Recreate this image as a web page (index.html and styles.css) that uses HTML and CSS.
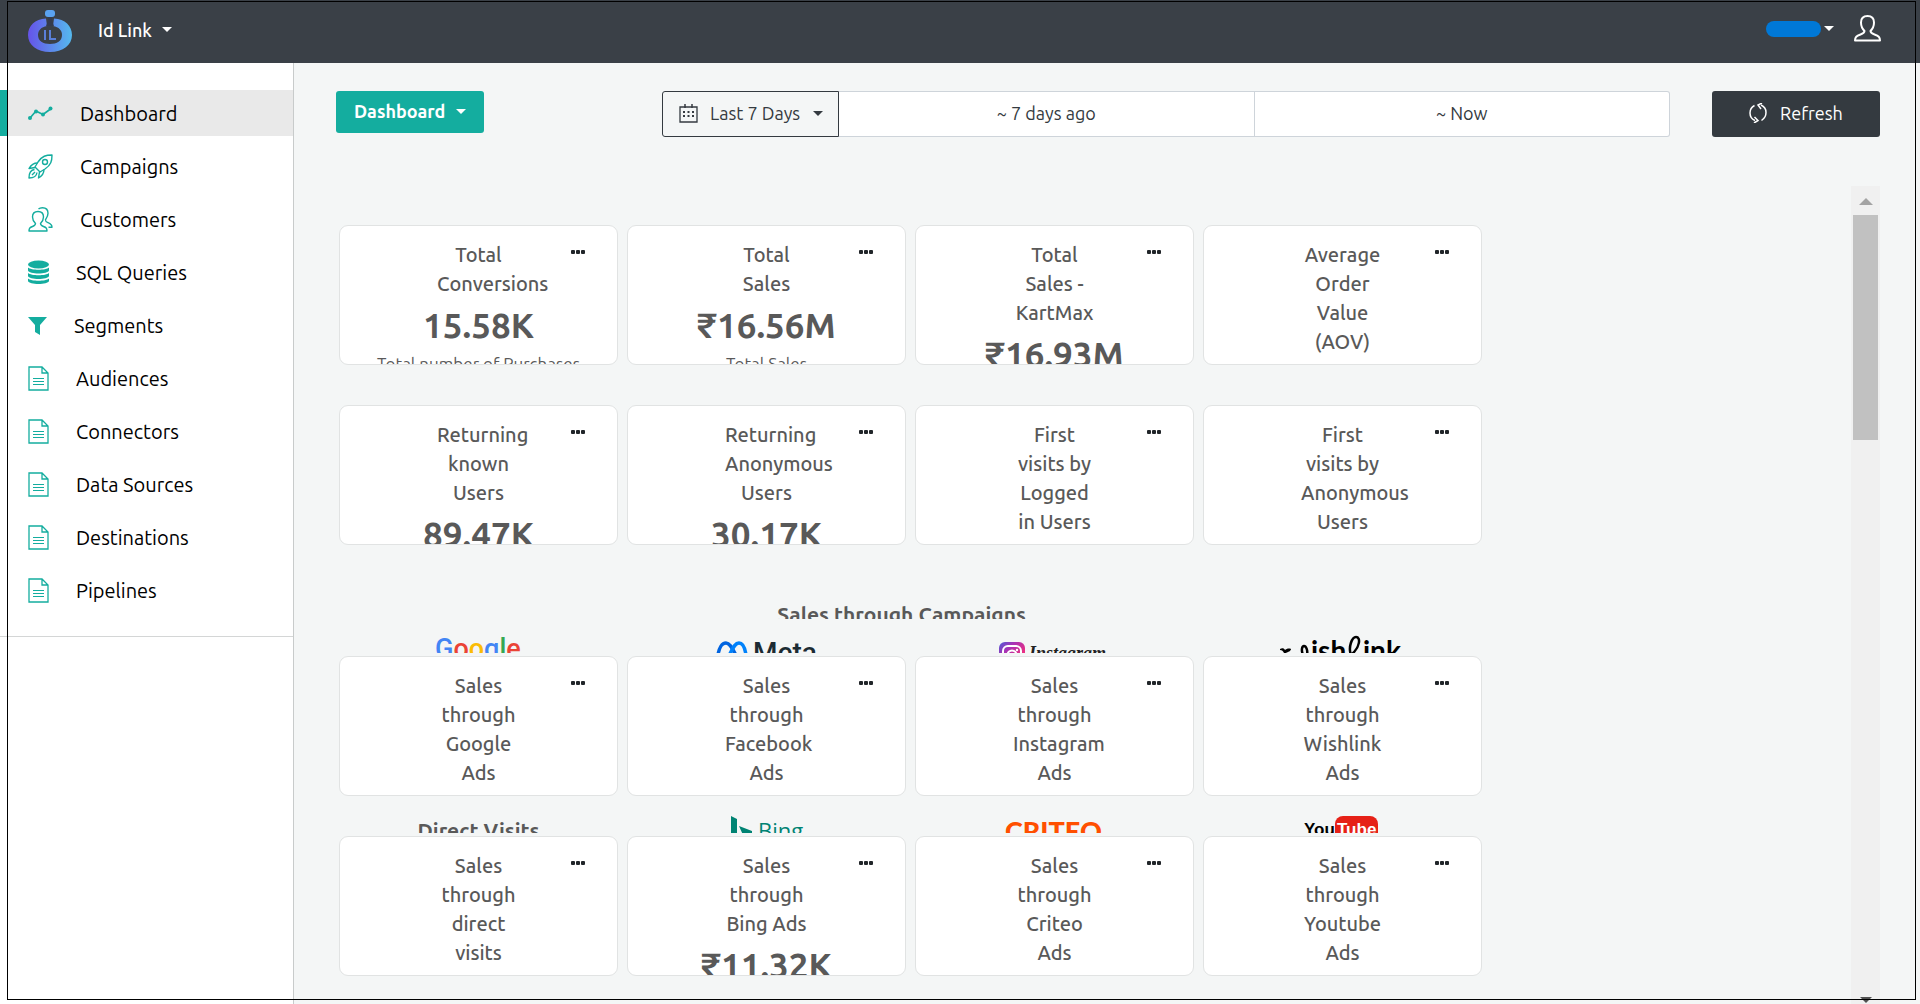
FILE: index.html
```html
<!DOCTYPE html>
<html lang="en">
<head>
    <meta charset="UTF-8">
    <meta name="viewport" content="width=device-width, initial-scale=1.0">
    <title>Id Link Dashboard</title>
    <link rel="stylesheet" href="styles.css">
</head>
<body>

    <!-- Icons used more than once -->
    <svg class="icon-defs" width="0" height="0">
        <symbol id="icon-file" viewBox="0 0 21 25">
            <path d="M1 1h13l6 6v17H1z M14 1v6h6" fill="none" stroke="currentColor" stroke-width="1.3"/>
            <path d="M5 12.5h11M5 15.5h11M5 18.5h11" stroke="currentColor" stroke-width="1.2"/>
        </symbol>
    </svg>

    <div class="frame"></div>

    <header class="navbar">
        <svg class="logo" width="44" height="43" viewBox="0 0 44 43">
            <defs>
                <linearGradient id="logoFill" x1="0" y1="0" x2="1" y2="0">
                    <stop offset="0" stop-color="#6553e8"/>
                    <stop offset="1" stop-color="#55b9ee"/>
                </linearGradient>
            </defs>
            <path d="M18 9.500C7 10 0 17 0 26c0 10 9 17 22 17s22-7 22-17c0-9-7-16-18-16.500L25 17c6 1 9 4.500 9 9 0 6-5 9-12 9s-12-3-12-9c0-4.500 3-8 9-9z" fill="url(#logoFill)"/>
            <rect x="17" y="1" width="10" height="7" rx="3" fill="#5aa2f0"/>
            <path d="M20 8h4v4l2 5h-8l2-5z" fill="#353b4c"/>
            <path d="M17 21v10M22 21v9h6" fill="none" stroke="#5a7fd8" stroke-width="2"/>
        </svg>
        <label class="dropdown nav-dropdown">
            <select aria-label="Workspace">
                <option>Id Link</option>
            </select>
        </label>
        <div class="nav-right">
            <button class="account" aria-label="Account"><span class="account-name"></span></button>
            <svg width="27" height="27" viewBox="0 0 27 27" fill="none" stroke="#fff" stroke-width="2" stroke-linejoin="round">
                <path d="M13.500 1C9.500 1 7 3.500 7 7.500c0 4 1.500 6.500 3.500 8.500 0 2-1 2.500-4 3.500C2.500 21 1 22 1 25.500h25c0-3.500-1.500-4.500-5.500-6-3-1-4-1.500-4-3.500C18.500 14 20 11.500 20 7.500 20 3.500 17.500 1 13.500 1z"/>
            </svg>
        </div>
    </header>

    <div class="layout">
        <nav class="sidebar">
            <ul class="menu">
                <li><a class="menu-link active" href="#">
                    <svg width="25" height="25" viewBox="0 0 25 25" fill="currentColor">
                        <path d="M2 17l6-7 7 3.500L22.500 8" fill="none" stroke="currentColor" stroke-width="1.700"/>
                        <circle cx="2" cy="17" r="2"/><circle cx="8" cy="10.500" r="2"/><circle cx="15" cy="13.500" r="2"/><circle cx="22.500" cy="7.500" r="2"/>
                    </svg>
                    Dashboard</a></li>
                <li><a class="menu-link" href="#">
                    <svg width="25" height="25" viewBox="0 0 25 25" fill="none" stroke="currentColor" stroke-width="1.400" stroke-linejoin="round">
                        <path d="M24 1c-6 0-10 1-14 7l-3 5 5 5 5-3c6-4 7-8 7-14z"/>
                        <circle cx="17" cy="8" r="2.500"/>
                        <path d="M9.500 9C5 9 3 11 1 14.500l6-1M16 15.500c0 4.500-2 6.500-5.500 8.500l1-6M6.500 15.500C2 16 1 19 1 24c5 0 7.500-1.500 8-5.500M4 21l3-3"/>
                    </svg>
                    Campaigns</a></li>
                <li><a class="menu-link" href="#">
                    <svg width="25" height="25" viewBox="0 0 25 25" fill="none" stroke="currentColor" stroke-width="1.400" stroke-linejoin="round">
                        <path d="M10 4.500c-3.500 0-5.500 2-5.500 5.500 0 3 1.500 5 3 6.500 0 1.500-.5 2-3 3C2 20.500 1 21 1 24h18c0-3-1-3.500-3.500-4.500s-3-1.500-3-3c1.500-1.500 3-3.500 3-6.500 0-3.500-2-5.500-5.500-5.500z"/>
                        <path d="M10.500 2c1-1 2.500-1.300 4-1.300 3.500 0 5.500 2 5.500 5.500 0 3-1.500 5-2.500 6.500 0 1.500 0 2 2.500 3s4 2 4 4.500H20.500"/>
                    </svg>
                    Customers</a></li>
                <li><a class="menu-link" href="#">
                    <svg width="21" height="25" viewBox="0 0 21 25" fill="currentColor">
                        <ellipse cx="10.500" cy="4.500" rx="10.500" ry="4"/>
                        <path d="M0 7.500c3 3 18 3 21 0v3c-1 4-20 4-21 0zM0 13c3 3 18 3 21 0v3c-1 4-20 4-21 0zM0 18.500c3 3 18 3 21 0v2.500c-1 4-20 4-21 0z"/>
                    </svg>
                    SQL Queries</a></li>
                <li><a class="menu-link" href="#">
                    <svg width="19" height="25" viewBox="0 0 19 25" fill="currentColor">
                        <path d="M0 4h19l-7 8v10l-5-3v-7z"/>
                    </svg>
                    Segments</a></li>
                <li><a class="menu-link" href="#"><svg width="21" height="25"><use href="#icon-file"/></svg>Audiences</a></li>
                <li><a class="menu-link" href="#"><svg width="21" height="25"><use href="#icon-file"/></svg>Connectors</a></li>
                <li><a class="menu-link" href="#"><svg width="21" height="25"><use href="#icon-file"/></svg>Data Sources</a></li>
                <li><a class="menu-link" href="#"><svg width="21" height="25"><use href="#icon-file"/></svg>Destinations</a></li>
                <li><a class="menu-link" href="#"><svg width="21" height="25"><use href="#icon-file"/></svg>Pipelines</a></li>
            </ul>
        </nav>

        <main class="content">
            <!-- Toolbar -->
            <div class="toolbar">
                <label class="dropdown dashboard-select">
                    <select aria-label="Dashboard">
                        <option>Dashboard</option>
                    </select>
                </label>
                <div class="date-range">
                    <label class="dropdown date-select">
                        <svg width="19" height="19" viewBox="0 0 19 19" fill="none" stroke="currentColor">
                            <path d="M1 3h17v15H1z" stroke-width="1.300"/>
                            <path d="M6 0v4M13 0v4" stroke-width="1.500"/>
                            <path d="M4 8h11M4 12h11" stroke-width="2" stroke-dasharray="2 2.500"/>
                        </svg>
                        <select aria-label="Date range">
                            <option>Last 7 Days</option>
                        </select>
                    </label>
                    <input type="text" class="date-input" aria-label="From" value="~ 7 days ago">
                    <input type="text" class="date-input last" aria-label="To" value="~ Now">
                </div>
                <button class="refresh-button">
                    <svg width="18" height="20" viewBox="0 0 18 20" fill="none" stroke="currentColor" stroke-width="1.500">
                        <path d="M6 17.500C2.500 16 1 13 1 10c0-3 1.500-6 4.500-7.500M12 2c3.500 1.500 5 4.500 5 7.500 0 3-1.500 6-4.500 8"/>
                        <path d="M13 0L9 2l3 4M5 20l4-2.500-3.500-3.500"/>
                    </svg>
                    Refresh
                </button>
            </div>

            <div class="board">
                <div class="widgets">
                    <section class="card-row spaced">
                        <article class="card">
                            <button class="card-menu" aria-label="Options"><i></i><i></i><i></i></button>
                            <h3 class="card-title">Total<br>Conversions</h3>
                            <div class="card-value">15.58K</div>
                            <div class="card-note">Total number of Purchases</div>
                        </article>
                        <article class="card">
                            <button class="card-menu" aria-label="Options"><i></i><i></i><i></i></button>
                            <h3 class="card-title">Total<br>Sales</h3>
                            <div class="card-value">₹16.56M</div>
                            <div class="card-note">Total Sales</div>
                        </article>
                        <article class="card">
                            <button class="card-menu" aria-label="Options"><i></i><i></i><i></i></button>
                            <h3 class="card-title">Total<br>Sales -<br>KartMax</h3>
                            <div class="card-value">₹16.93M</div>
                        </article>
                        <article class="card">
                            <button class="card-menu" aria-label="Options"><i></i><i></i><i></i></button>
                            <h3 class="card-title">Average<br>Order<br>Value<br>(AOV)</h3>
                        </article>
                    </section>

                    <section class="card-row">
                        <article class="card">
                            <button class="card-menu" aria-label="Options"><i></i><i></i><i></i></button>
                            <h3 class="card-title">Returning<br>known<br>Users</h3>
                            <div class="card-value">89.47K</div>
                        </article>
                        <article class="card">
                            <button class="card-menu" aria-label="Options"><i></i><i></i><i></i></button>
                            <h3 class="card-title">Returning<br>Anonymous<br>Users</h3>
                            <div class="card-value">30.17K</div>
                        </article>
                        <article class="card">
                            <button class="card-menu" aria-label="Options"><i></i><i></i><i></i></button>
                            <h3 class="card-title">First<br>visits by<br>Logged<br>in Users</h3>
                        </article>
                        <article class="card">
                            <button class="card-menu" aria-label="Options"><i></i><i></i><i></i></button>
                            <h3 class="card-title">First<br>visits by<br>Anonymous<br>Users</h3>
                        </article>
                    </section>

                    <h2 class="section-title">Sales through Campaigns</h2>

                    <div class="brand-row">
                        <svg width="140" height="34" viewBox="0 0 140 34">
                            <text class="google" x="26" y="39"><tspan fill="#4285f4">G</tspan><tspan fill="#ea4335">o</tspan><tspan fill="#fbbc05">o</tspan><tspan fill="#4285f4">g</tspan><tspan fill="#34a853">l</tspan><tspan fill="#ea4335">e</tspan></text>
                        </svg>
                        <svg width="140" height="34" viewBox="0 0 140 34">
                            <path d="M21 36c1-7 4-12 8-12 6 0 9 14 14 17" fill="none" stroke="#0064e0" stroke-width="3.500"/>
                            <path d="M30 40c5-8 7-16 12-16 4 0 6 5 7 12" fill="none" stroke="#0082fb" stroke-width="3.500"/>
                            <text class="meta" x="56" y="43">Meta</text>
                        </svg>
                        <svg width="140" height="34" viewBox="0 0 140 34">
                            <defs>
                                <linearGradient id="instaFill" x1="0" y1="0" x2="1" y2="1">
                                    <stop offset="0" stop-color="#4b5bd8"/>
                                    <stop offset=".3" stop-color="#a733b5"/>
                                    <stop offset=".7" stop-color="#ee2f80"/>
                                </linearGradient>
                            </defs>
                            <rect x="14" y="23" width="26" height="26" rx="6" fill="url(#instaFill)"/>
                            <rect x="18" y="27" width="18" height="18" rx="5" fill="none" stroke="#fff" stroke-width="2"/>
                            <circle cx="27" cy="36" r="4.500" fill="none" stroke="#fff" stroke-width="2"/>
                            <circle cx="32" cy="31" r="1.200" fill="#fff"/>
                            <text class="instagram" x="44" y="40">Instagram</text>
                        </svg>
                        <svg width="140" height="34" viewBox="0 0 140 34" aria-label="wishlink">
                            <path d="M7 30c2-1 4-1 5 1 1-1 4-2 6-1 0 2-3 3-5 4h-2c-1-2-2-3-4-3z" fill="#000"/>
                            <path d="M30 36c-2-5-1-9 1-9s4 4 3 9" fill="none" stroke="#000" stroke-width="2.500"/>
                            <text class="wishlink" x="38" y="42">ish</text>
                            <path d="M78 36c-3-8 1-18 5-18 5 0 4 10-4 17" fill="none" stroke="#000" stroke-width="2.500"/>
                            <text class="wishlink" x="90" y="42">ink</text>
                        </svg>
                    </div>

                    <section class="card-row">
                        <article class="card">
                            <button class="card-menu" aria-label="Options"><i></i><i></i><i></i></button>
                            <h3 class="card-title">Sales<br>through<br>Google<br>Ads</h3>
                        </article>
                        <article class="card">
                            <button class="card-menu" aria-label="Options"><i></i><i></i><i></i></button>
                            <h3 class="card-title">Sales<br>through<br>Facebook<br>Ads</h3>
                        </article>
                        <article class="card">
                            <button class="card-menu" aria-label="Options"><i></i><i></i><i></i></button>
                            <h3 class="card-title">Sales<br>through<br>Instagram<br>Ads</h3>
                        </article>
                        <article class="card">
                            <button class="card-menu" aria-label="Options"><i></i><i></i><i></i></button>
                            <h3 class="card-title">Sales<br>through<br>Wishlink<br>Ads</h3>
                        </article>
                    </section>

                    <div class="brand-row">
                        <h2 class="brand-title">Direct Visits</h2>
                        <svg width="140" height="34" viewBox="0 0 140 34" fill="#008373">
                            <path d="M34 17l6 3v20l-6-4zM42 27l13 5v4H46z"/>
                            <text class="bing" x="61" y="40">Bing</text>
                        </svg>
                        <svg width="140" height="34" viewBox="0 0 140 34">
                            <text class="criteo" x="20" y="42">CRITEO</text>
                        </svg>
                        <svg width="140" height="34" viewBox="0 0 140 34">
                            <rect x="62" y="17" width="43" height="34" rx="8" fill="#e62117"/>
                            <text class="youtube" x="31" y="36">You</text>
                            <text class="youtube" x="64" y="36" fill="#fff">Tube</text>
                        </svg>
                    </div>

                    <section class="card-row">
                        <article class="card">
                            <button class="card-menu" aria-label="Options"><i></i><i></i><i></i></button>
                            <h3 class="card-title">Sales<br>through<br>direct<br>visits</h3>
                        </article>
                        <article class="card">
                            <button class="card-menu" aria-label="Options"><i></i><i></i><i></i></button>
                            <h3 class="card-title">Sales<br>through<br>Bing Ads</h3>
                            <div class="card-value">₹11.32K</div>
                        </article>
                        <article class="card">
                            <button class="card-menu" aria-label="Options"><i></i><i></i><i></i></button>
                            <h3 class="card-title">Sales<br>through<br>Criteo<br>Ads</h3>
                        </article>
                        <article class="card">
                            <button class="card-menu" aria-label="Options"><i></i><i></i><i></i></button>
                            <h3 class="card-title">Sales<br>through<br>Youtube<br>Ads</h3>
                        </article>
                    </section>
                </div>

                <div class="scrollbar">
                    <span class="arrow-up"></span>
                    <span class="thumb"></span>
                    <span class="arrow-down"></span>
                </div>
            </div>
        </main>
    </div>

</body>
</html>
```

FILE: styles.css
```css
* {
    box-sizing: border-box;
}
body {
    display: flex;
    flex-direction: column;
    height: 100vh;
    margin: 0;
    overflow: hidden;
    font-family: Ubuntu, "Noto Sans", sans-serif;
    font-size: 18px;
    color: #343a40;
    background-color: #f4f6f6;
}
h2, h3, ul {
    margin: 0;
    padding: 0;
}
button, input, select {
    font: inherit;
    color: inherit;
}
svg {
    flex-shrink: 0;
}
.icon-defs {
    position: absolute;
}

/* thin outline over the whole page */
.frame {
    position: fixed;
    top: 1px;
    right: 4px;
    bottom: 4px;
    left: 7px;
    border: 1px solid #000;
    pointer-events: none;
    z-index: 10;
}

/* Dropdowns */
.dropdown {
    display: flex;
    align-items: center;
    gap: 10px;
    cursor: pointer;
}
.dropdown select {
    appearance: none;
    padding: 0;
    border: none;
    background: none;
    cursor: pointer;
}
.dropdown::after,
.account::after {
    content: "";
    border-top: 5px solid currentColor;
    border-left: 5px solid transparent;
    border-right: 5px solid transparent;
}

/* Top bar */
.navbar {
    display: flex;
    align-items: center;
    flex-shrink: 0;
    height: 63px;
    padding: 0 39px 2px 28px;
    background-color: #3a4047;
    color: #fff;
}
.nav-dropdown {
    margin-left: 26px;
    padding-bottom: 2px;
    font-weight: 500;
}
.nav-right {
    display: flex;
    align-items: center;
    gap: 20px;
    margin-left: auto;
    padding-bottom: 4px;
}
.account {
    display: flex;
    align-items: center;
    gap: 3px;
    padding: 0;
    border: none;
    background: none;
}
.account-name {
    width: 55px;
    height: 16px;
    border-radius: 8px;
    background-color: #0078d7;
}

/* Sidebar */
.layout {
    display: flex;
    flex: 1;
    min-height: 0;
}
.sidebar {
    flex: 0 0 294px;
    border-right: 1px solid #c8cbcb;
    background-color: #fff;
}
.menu {
    display: flex;
    flex-direction: column;
    gap: 7px;
    padding: 27px 0 23px;
    border-bottom: 1px solid #d4d6d6;
    list-style: none;
}
.menu-link {
    display: flex;
    align-items: center;
    gap: 27px;
    height: 46px;
    padding-left: 21px;
    border-left: 7px solid transparent;
    font-size: 20px;
    color: #000;
    text-decoration: none;
}
.menu-link svg {
    color: #14ad9f;
}
.menu-link.active {
    border-left-color: #14ad9f;
    background-color: #e9e9e9;
}

/* Toolbar */
.content {
    display: flex;
    flex: 1;
    flex-direction: column;
    gap: 49px;
    padding: 28px 40px 0 42px;
}
.toolbar {
    display: flex;
    align-items: flex-start;
}
.dashboard-select {
    height: 42px;
    padding: 0 18px 2px;
    border-radius: 3px;
    background-color: #14ad9f;
    color: #fff;
    font-weight: bold;
}
.date-range {
    display: flex;
    flex: 1;
    height: 46px;
    margin: 0 42px 0 178px;
}
.date-select {
    gap: 12px;
    padding: 0 15px 2px 16px;
    border: 1px solid #343a40;
    border-radius: 3px 0 0 3px;
}
.date-input {
    flex: 1;
    min-width: 0;
    padding: 0 0 2px;
    border: 1px solid #ced4da;
    border-left: none;
    background-color: #fff;
    text-align: center;
}
.date-input.last {
    border-radius: 0 3px 3px 0;
}
.refresh-button {
    display: flex;
    align-items: center;
    justify-content: center;
    gap: 13px;
    width: 168px;
    height: 46px;
    padding: 0 0 2px;
    border: none;
    border-radius: 3px;
    background-color: #343a40;
    color: #fff;
    cursor: pointer;
}

/* Board */
.board {
    display: flex;
    flex: 1;
    justify-content: space-between;
    min-height: 0;
}
.widgets {
    width: 75%;
    padding: 39px 12px 0 3px;
}
.card-row {
    display: grid;
    grid-template-columns: repeat(4, 1fr);
    gap: 9px;
}
.card-row.spaced {
    margin-bottom: 40px;
}
.card {
    position: relative;
    height: 140px;
    padding-top: 14px;
    border: 1px solid #e1e3e3;
    border-radius: 9px;
    background-color: #fff;
    color: #595959;
    text-align: center;
    overflow: hidden;
}
.card-title {
    width: 83px;
    margin: 0 auto;
    font-size: 20px;
    font-weight: 500;
    line-height: 29px;
    white-space: nowrap;
}
.card-value {
    font-size: 35px;
    font-weight: bold;
    line-height: 55px;
}
.card-note {
    font-size: 17px;
    line-height: 22px;
}
.card-menu {
    position: absolute;
    top: 20px;
    right: 28px;
    display: flex;
    gap: 1px;
    padding: 4px;
    border: none;
    background: none;
    cursor: pointer;
}
.card-menu i {
    width: 4px;
    height: 4px;
    border-radius: 1px;
    background-color: #212529;
}
.section-title {
    height: 74px;
    padding: 56px 18px 0 0;
    font-size: 21px;
    line-height: 26px;
    color: #595959;
    text-align: center;
    overflow: hidden;
}

/* Brand logos above the cards */
.brand-row {
    display: grid;
    grid-template-columns: repeat(4, 1fr);
    gap: 9px;
    height: 34px;
    margin-bottom: 3px;
    justify-items: center;
    overflow: hidden;
}
.card-row + .brand-row {
    margin-top: 3px;
}
.brand-title {
    padding-top: 18px;
    font-size: 21px;
    line-height: 26px;
    color: #595959;
}
.google {
    font: 500 27px Roboto, sans-serif;
}
.meta {
    font: 500 28px Roboto, sans-serif;
    fill: #1c2b33;
}
.instagram {
    font: italic bold 18px "Liberation Serif", serif;
    fill: #222;
}
.wishlink {
    font: bold 28px Lato, sans-serif;
    fill: #000;
}
.bing {
    font: 22px "Open Sans", sans-serif;
}
.criteo {
    font: 900 27px Lato, sans-serif;
    fill: #ff4f00;
}
.youtube {
    font: bold 17px "Liberation Sans", sans-serif;
}

/* Scrollbar */
.scrollbar {
    display: flex;
    flex-direction: column;
    align-items: center;
    width: 29px;
    padding: 12px 0 1px;
    background-color: #f0f0f0;
}
.arrow-up {
    border-bottom: 7px solid #a3a3a3;
    border-left: 7px solid transparent;
    border-right: 7px solid transparent;
}
.thumb {
    width: 25px;
    height: 28%;
    margin-top: 10px;
    background-color: #c1c1c1;
}
.arrow-down {
    margin-top: auto;
    border-top: 6px solid #505050;
    border-left: 6px solid transparent;
    border-right: 6px solid transparent;
}
```
